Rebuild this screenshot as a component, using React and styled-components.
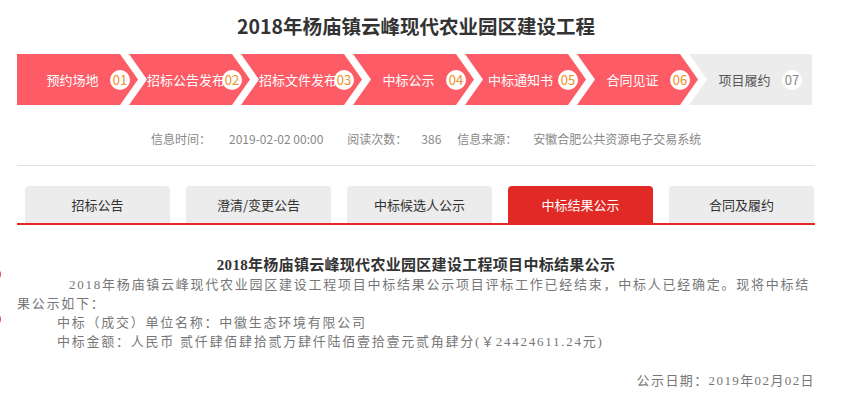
import React from "react";
import styled, { createGlobalStyle } from "styled-components";

const GlobalStyle = createGlobalStyle`
  body {
    margin: 0;
    background: #fff;
    font-family: "Noto Sans CJK SC", "Liberation Sans", sans-serif;
  }
`;

const Page = styled.div`
  width: 798px;
  margin-left: 17px;
  padding-bottom: 12px;
`;

const Title = styled.h1`
  margin: 0;
  padding-top: 12px;
  font-size: 19.5px;
  line-height: 28px;
  font-weight: 700;
  color: #333;
  text-align: center;
`;

const Steps = styled.ol`
  list-style: none;
  margin: 14px 0 0;
  padding: 0;
  display: flex;
  height: 51px;
`;

const shapes = {
  first: "polygon(0 0, calc(100% - 18px) 0, 100% 50%, calc(100% - 18px) 100%, 0 100%)",
  middle:
    "polygon(0 0, calc(100% - 18px) 0, 100% 50%, calc(100% - 18px) 100%, 0 100%, 18px 50%)",
  last: "polygon(0 0, 100% 0, 100% 100%, 0 100%, 18px 50%)",
};

const Step = styled.li`
  box-sizing: border-box;
  flex: none;
  width: ${(p) => (p.$shape === "last" ? 123 : 121)}px;
  margin-left: ${(p) => (p.$shape === "first" ? 0 : -9)}px;
  padding-left: 18px;
  display: flex;
  align-items: center;
  background: ${(p) => (p.$done ? "#fd5c66" : "#ececec")};
  color: ${(p) => (p.$done ? "#fff" : "#555")};
  clip-path: ${(p) => shapes[p.$shape]};
  font-size: 13px;
`;

const StepLabel = styled.span`
  width: 75px;
  text-align: center;
  white-space: nowrap;
`;

const StepNum = styled.span`
  width: 20px;
  height: 20px;
  border-radius: 50%;
  background: #fff;
  color: ${(p) => (p.$done ? "#f0902a" : "#888")};
  font-size: 13px;
  line-height: 20px;
  text-align: center;
`;

const Meta = styled.div`
  margin-top: 24px;
  padding: 0 0 16px 134px;
  border-bottom: 1px solid #e2e2e2;
  display: flex;
  font-size: 12px;
  line-height: 20px;
  color: #888;
`;

const MetaLabel = styled.span`
  margin-right: ${(p) => p.$after || 0}px;
`;

const MetaValue = styled.span`
  margin-right: ${(p) => p.$after || 0}px;
`;

const TabBar = styled.div`
  margin-top: 20px;
  padding-left: 8px;
  display: flex;
  gap: 16px;
  border-bottom: 2px solid #e12a25;
`;

const Tab = styled.div`
  width: 145px;
  height: 37px;
  border-radius: 4px 4px 0 0;
  background: ${(p) => (p.$active ? "#e12a25" : "#ececec")};
  color: ${(p) => (p.$active ? "#fff" : "#333")};
  font-size: 13px;
  line-height: 37px;
  text-align: center;
`;

const Article = styled.div`
  margin-top: 31px;
  font-family: "Liberation Serif", "Noto Sans CJK SC", serif;
  font-size: 13px;
  line-height: 19px;
  letter-spacing: 1.75px;
  color: #777;
`;

const Heading = styled.h2`
  margin: 0;
  font-size: 15px;
  line-height: 19px;
  font-weight: 700;
  letter-spacing: 0.3px;
  color: #333;
  text-align: center;
`;

const Para = styled.p`
  margin: 0;
  text-indent: ${(p) => p.$indent || 0}px;
  padding-left: ${(p) => p.$pad || 0}px;
`;

const DateLine = styled.p`
  margin: 20px 0 0;
  text-align: right;
  letter-spacing: 1.4px;
`;

const SideDock = styled.div`
  position: fixed;
  left: -19px;
  top: 267px;
  display: flex;
  flex-direction: column;
  gap: 30px;
`;

const DockButton = styled.div`
  width: 20px;
  height: 15px;
  border-radius: 8px;
  background: #f2404c;
`;

const steps = ["预约场地", "招标公告发布", "招标文件发布", "中标公示", "中标通知书", "合同见证", "项目履约"];
const tabs = ["招标公告", "澄清/变更公告", "中标候选人公示", "中标结果公示", "合同及履约"];

export default function App() {
  return (
    <>
      <GlobalStyle />
      <SideDock>
        <DockButton />
        <DockButton />
      </SideDock>
      <Page>
        <Title>2018年杨庙镇云峰现代农业园区建设工程</Title>

        <Steps>
          {steps.map((s, i) => {
            const shape = i === 0 ? "first" : i === steps.length - 1 ? "last" : "middle";
            const done = i < steps.length - 1;
            return (
              <Step key={s} $shape={shape} $done={done}>
                <StepLabel>{s}</StepLabel>
                <StepNum $done={done}>{"0" + (i + 1)}</StepNum>
              </Step>
            );
          })}
        </Steps>

        <Meta>
          <MetaLabel $after={18}>信息时间：</MetaLabel>
          <MetaValue $after={24}>2019-02-02 00:00</MetaValue>
          <MetaLabel $after={14}>阅读次数：</MetaLabel>
          <MetaValue $after={16}>386</MetaValue>
          <MetaLabel $after={16}>信息来源：</MetaLabel>
          <MetaValue>安徽合肥公共资源电子交易系统</MetaValue>
        </Meta>

        <TabBar>
          {tabs.map((t) => (
            <Tab key={t} $active={t === "中标结果公示"}>
              {t}
            </Tab>
          ))}
        </TabBar>

        <Article>
          <Heading>2018年杨庙镇云峰现代农业园区建设工程项目中标结果公示</Heading>
          <Para $indent={52}>
            2018年杨庙镇云峰现代农业园区建设工程项目中标结果公示项目评标工作已经结束，中标人已经确定。现将中标结果公示如下：
          </Para>
          <Para $pad={40}>中标（成交）单位名称：中徽生态环境有限公司</Para>
          <Para $pad={40}>中标金额：人民币 贰仟肆佰肆拾贰万肆仟陆佰壹拾壹元贰角肆分(￥24424611.24元)</Para>
          <DateLine>公示日期：2019年02月02日</DateLine>
        </Article>
      </Page>
    </>
  );
}
